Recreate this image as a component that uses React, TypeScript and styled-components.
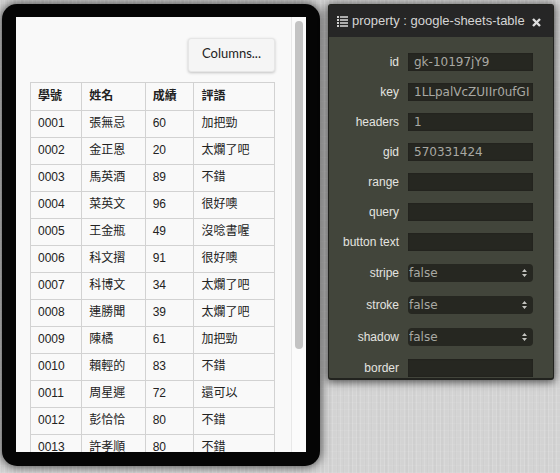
import React from "react";
import styled, { createGlobalStyle } from "styled-components";

const GlobalStyle = createGlobalStyle`
  * { box-sizing: border-box; }
  body {
    margin: 0;
    background-color: #d3d3d3;
    background-image:
      repeating-linear-gradient(90deg, rgba(255,255,255,0.14) 0 1px, transparent 1px 4px),
      repeating-linear-gradient(90deg, rgba(0,0,0,0.02) 0 2px, transparent 2px 7px),
      repeating-linear-gradient(0deg, rgba(255,255,255,0.08) 0 1px, transparent 1px 7px);
  }
`;

const Page = styled.main`
  display: grid;
  grid-template-columns: minmax(0, 318fr) minmax(0, 226fr);
  grid-template-rows: minmax(0, 1fr);
  align-items: start;
  gap: 8px;
  height: 100vh;
  padding: 4px 6px 7px 2px;
  overflow: hidden;
`;

const Device = styled.section`
  height: 100%;
  padding: 13px 14px 14px;
  background: #050505;
  border-radius: 15px;
  box-shadow: 0 0 10px 1px rgba(0, 0, 0, 0.65);
`;

const Screen = styled.div`
  display: flex;
  height: 100%;
  overflow: hidden;
  background: #f9f9f9;
`;

const Content = styled.div`
  flex: 1;
  display: flex;
  flex-direction: column;
  align-items: flex-end;
  gap: 10px;
  padding: 21px 16px 0 14px;
  font: 12px "Liberation Sans", "Noto Sans CJK TC", sans-serif;
  color: #222;
`;

const ColumnsButton = styled.button`
  flex: none;
  height: 34px;
  padding: 0 13px 4px;
  border: 1px solid #e6e6e6;
  border-radius: 3px;
  background: #f5f5f5;
  box-shadow: 0 1px 3px rgba(0, 0, 0, 0.22);
  color: #222;
  font: 13px "Lato", sans-serif;
`;

const Table = styled.table`
  flex: none;
  width: 100%;
  table-layout: fixed;
  border-collapse: collapse;
`;

const Column = styled.col<{ $share: number }>`
  width: ${(p) => p.$share}%;
`;

const Row = styled.tr<{ $head?: boolean }>`
  height: ${(p) => (p.$head ? 28 : 27)}px;
`;

const cell = `
  padding: 0 0 2px 7px;
  border: 1px solid #d2d2d2;
  text-align: left;
  line-height: 24px;
  white-space: nowrap;
`;

const HeadCell = styled.th`
  ${cell}
  font-weight: 700;
`;

const Cell = styled.td`
  ${cell}
`;

const ScrollTrack = styled.div`
  flex: 0 0 15px;
  padding: 4px 3px 0;
  background: #fbfbfb;
  border-left: 1px solid #e8e8e8;
`;

const ScrollThumb = styled.div`
  height: 76%;
  border-radius: 4px;
  background: #c3c3c3;
`;

const Panel = styled.section`
  height: calc(100vh - 97px);
  overflow: hidden;
  display: flex;
  flex-direction: column;
  border: 1px solid #22231f;
  border-bottom-width: 2px;
  border-radius: 3px;
  background: #42453b;
  box-shadow: 0 1px 8px 1px rgba(0, 0, 0, 0.65);
  font-family: "Liberation Sans", Arial, sans-serif;
`;

const PanelHeader = styled.header`
  flex: none;
  display: flex;
  align-items: center;
  gap: 4px;
  height: 32px;
  padding: 0 12px 0 8px;
  background: #262626;
  color: #d5d5d5;
`;

const Title = styled.h1`
  flex: 1;
  min-width: 0;
  margin: 0;
  font-size: 13px;
  font-weight: 400;
  line-height: 16px;
  white-space: nowrap;
`;

const CloseButton = styled.button`
  flex: none;
  display: flex;
  padding: 2px 0 0;
  border: 0;
  background: none;
  color: #dedede;
`;

const Form = styled.form`
  display: flex;
  flex-direction: column;
  gap: 12px;
  padding: 16px 20px 0 0;
`;

const Field = styled.div<{ $tall?: boolean }>`
  flex: none;
  display: grid;
  grid-template-columns: 70px minmax(0, 1fr);
  align-items: center;
  column-gap: 9px;
  height: ${(p) => (p.$tall ? 20 : 18)}px;
`;

const Label = styled.label`
  color: #e4e4e0;
  font-size: 12px;
  line-height: 18px;
  text-align: right;
  white-space: nowrap;
`;

const controlStyle = `
  width: 100%;
  min-width: 0;
  height: 18px;
  border: 0;
  background: #262721;
  color: #a9a9a3;
  font: 12px "DejaVu Sans", Verdana, sans-serif;
`;

const TextInput = styled.input`
  ${controlStyle}
  padding: 0 2px 0 6px;
  box-shadow: inset 0 0 2px #1b1c18;
`;

const SelectWrap = styled.div`
  display: grid;
  align-items: center;
  & > * { grid-area: 1 / 1; }
  & > svg { justify-self: end; margin-right: 6px; pointer-events: none; }
`;

const Select = styled.select`
  ${controlStyle}
  appearance: none;
  padding: 0 0 0 1px;
  border-radius: 4px;
`;

const Icon = styled.svg`
  flex: none;
  display: block;
`;

const ListIcon = () => (
  <Icon width="11" height="11" viewBox="0 0 11 11" fill="#cfcfcf" aria-hidden="true">
    {[0, 3, 6, 9].map((y) => (
      <g key={y}>
        <rect x="0" y={y} width="2" height="2" />
        <rect x="3" y={y} width="8" height="2" opacity="0.8" />
      </g>
    ))}
  </Icon>
);

const CloseIcon = () => (
  <Icon width="9" height="9" viewBox="0 0 9 9" stroke="currentColor" strokeWidth="2.4" aria-hidden="true">
    <path d="M1 1L8 8M8 1L1 8" />
  </Icon>
);

const ArrowsIcon = () => (
  <Icon width="5" height="8" viewBox="0 0 5 8" fill="#c4c4c0" aria-hidden="true">
    <path d="M0 3L2.5 0L5 3ZM0 5L2.5 8L5 5Z" />
  </Icon>
);

const rows = [
  ["0001", "張無忌", "60", "加把勁"],
  ["0002", "金正恩", "20", "太爛了吧"],
  ["0003", "馬英酒", "89", "不錯"],
  ["0004", "菜英文", "96", "很好噢"],
  ["0005", "王金瓶", "49", "沒唸書喔"],
  ["0006", "科文摺", "91", "很好噢"],
  ["0007", "科博文", "34", "太爛了吧"],
  ["0008", "連勝聞", "39", "太爛了吧"],
  ["0009", "陳橘", "61", "加把勁"],
  ["0010", "賴輕的", "83", "不錯"],
  ["0011", "周星遲", "72", "還可以"],
  ["0012", "彭恰恰", "80", "不錯"],
  ["0013", "許孝順", "80", "不錯"],
];

const fields = [
  { name: "id", value: "gk-10197jY9" },
  { name: "key", value: "1LLpalVcZUIIr0ufGI" },
  { name: "headers", value: "1" },
  { name: "gid", value: "570331424" },
  { name: "range", value: "" },
  { name: "query", value: "" },
  { name: "button text", value: "" },
  { name: "stripe", value: "false", select: true },
  { name: "stroke", value: "false", select: true },
  { name: "shadow", value: "false", select: true },
  { name: "border", value: "" },
];

export default function App() {
  return (
    <>
      <GlobalStyle />
      <Page>
        <Device>
          <Screen>
            <Content>
              <ColumnsButton type="button">Columns...</ColumnsButton>
              <Table>
                <colgroup>
                  {[21, 26, 20, 33].map((share, i) => (
                    <Column key={i} $share={share} />
                  ))}
                </colgroup>
                <thead>
                  <Row $head>
                    {["學號", "姓名", "成績", "評語"].map((h) => (
                      <HeadCell key={h}>{h}</HeadCell>
                    ))}
                  </Row>
                </thead>
                <tbody>
                  {rows.map((r) => (
                    <Row key={r[0]}>
                      {r.map((c, i) => (
                        <Cell key={i}>{c}</Cell>
                      ))}
                    </Row>
                  ))}
                </tbody>
              </Table>
            </Content>
            <ScrollTrack>
              <ScrollThumb />
            </ScrollTrack>
          </Screen>
        </Device>
        <Panel>
          <PanelHeader>
            <ListIcon />
            <Title>property : google-sheets-table</Title>
            <CloseButton type="button" aria-label="Close">
              <CloseIcon />
            </CloseButton>
          </PanelHeader>
          <Form>
            {fields.map((f) => {
              const id = `field-${f.name.replace(" ", "-")}`;
              return (
                <Field key={f.name} $tall={f.select}>
                  <Label htmlFor={id}>{f.name}</Label>
                  {f.select ? (
                    <SelectWrap>
                      <Select id={id} defaultValue={f.value}>
                        <option>false</option>
                        <option>true</option>
                      </Select>
                      <ArrowsIcon />
                    </SelectWrap>
                  ) : (
                    <TextInput id={id} defaultValue={f.value} />
                  )}
                </Field>
              );
            })}
          </Form>
        </Panel>
      </Page>
    </>
  );
}
